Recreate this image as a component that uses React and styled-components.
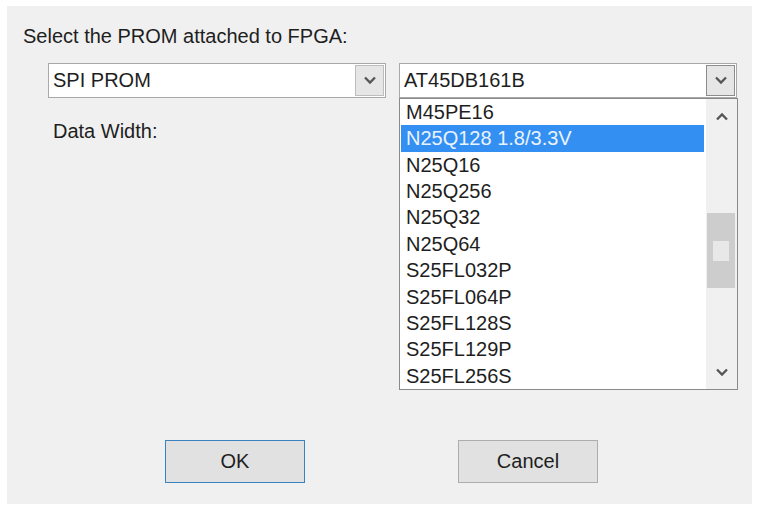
import React from "react";
import styled, { createGlobalStyle } from "styled-components";

const GlobalStyle = createGlobalStyle`
  html, body {
    margin: 0;
    padding: 0;
    background: #ffffff;
  }
  body {
    font-family: "Liberation Sans", Arial, sans-serif;
    color: #1e1e1e;
  }
`;

const Page = styled.div`
  width: 764px;
  height: 515px;
  padding: 6px 0 0 7px;
  box-sizing: border-box;
`;

const Dialog = styled.div`
  width: 745px;
  height: 498px;
  background: #f0f0f0;
  box-sizing: border-box;
  padding: 18px 0 21px 16px;
  display: flex;
  flex-direction: column;
  font-size: 20px;
`;

const Title = styled.div`
  line-height: 24px;
`;

const ComboRow = styled.div`
  display: flex;
  gap: 13px;
  margin: 15px 0 0 25px;
`;

const Column = styled.div`
  position: relative;
  display: flex;
  flex-direction: column;
  width: 338px;
`;

const Combo = styled.div`
  height: 35px;
  box-sizing: border-box;
  border: 1px solid #a9a9a9;
  background: #ffffff;
  display: flex;
  align-items: stretch;
`;

const ComboText = styled.div`
  flex: 1;
  padding-left: 4px;
  line-height: 33px;
  white-space: nowrap;
`;

const ComboButton = styled.div`
  width: 29px;
  margin: 1px;
  box-sizing: border-box;
  border: 1px solid ${(p) => (p.$dark ? "#8c8c8c" : "#bdbdbd")};
  background: #e6e6e6;
  display: flex;
  align-items: center;
  justify-content: center;
`;

const FieldLabel = styled.div`
  margin: 21px 0 0 5px;
  line-height: 24px;
`;

const DropList = styled.div`
  position: absolute;
  top: 35px;
  left: 0;
  width: 339px;
  height: 292px;
  box-sizing: border-box;
  border: 1px solid #8a8a8a;
  background: #ffffff;
  display: flex;
`;

const Items = styled.div`
  flex: 1;
  padding: 0 2px 0 1px;
`;

const Item = styled.div`
  height: 26.36px;
  line-height: 26px;
  padding-left: 5px;
  white-space: nowrap;
  background: ${(p) => (p.$selected ? "#3390f2" : "transparent")};
  color: ${(p) => (p.$selected ? "#eaf3ff" : "#1e1e1e")};
`;

const ScrollBar = styled.div`
  width: 31px;
  background: #f0f0f0;
  display: flex;
  flex-direction: column;
`;

const ScrollArrow = styled.div`
  height: 34px;
  display: flex;
  align-items: center;
  justify-content: center;
`;

const Track = styled.div`
  flex: 1;
`;

const Thumb = styled.div`
  margin: 80px 2px 0 1px;
  height: 75px;
  background: #cdcdcd;
  display: flex;
  align-items: center;
  justify-content: center;
`;

const Grip = styled.div`
  width: 16px;
  height: 20px;
  background: #e8e8e8;
`;

const ButtonRow = styled.div`
  margin-top: auto;
  display: flex;
  justify-content: center;
  gap: 153px;
  padding-right: 12px;
`;

const Button = styled.button`
  width: 140px;
  height: 43px;
  box-sizing: border-box;
  font-family: "Liberation Sans", Arial, sans-serif;
  font-size: 20px;
  color: #1e1e1e;
  background: #e1e1e1;
  border: 1px solid ${(p) => (p.$default ? "#3b83c0" : "#adadad")};
  padding: 0;
`;

const Chevron = ({ up }) => (
  <svg width="14" height="9" viewBox="0 0 14 9">
    <path
      d={up ? "M2 7.5 L7 2.5 L12 7.5" : "M2 1.5 L7 6.5 L12 1.5"}
      fill="none"
      stroke="#555555"
      strokeWidth="2.3"
    />
  </svg>
);

const proms = [
  "M45PE16",
  "N25Q128 1.8/3.3V",
  "N25Q16",
  "N25Q256",
  "N25Q32",
  "N25Q64",
  "S25FL032P",
  "S25FL064P",
  "S25FL128S",
  "S25FL129P",
  "S25FL256S",
];

export default function App() {
  return (
    <Page>
      <GlobalStyle />
      <Dialog>
        <Title>Select the PROM attached to FPGA:</Title>
        <ComboRow>
          <Column>
            <Combo>
              <ComboText>SPI PROM</ComboText>
              <ComboButton>
                <Chevron />
              </ComboButton>
            </Combo>
            <FieldLabel>Data Width:</FieldLabel>
          </Column>
          <Column>
            <Combo>
              <ComboText>AT45DB161B</ComboText>
              <ComboButton $dark>
                <Chevron />
              </ComboButton>
            </Combo>
            <DropList>
              <Items>
                {proms.map((p) => (
                  <Item key={p} $selected={p === "N25Q128 1.8/3.3V"}>
                    {p}
                  </Item>
                ))}
              </Items>
              <ScrollBar>
                <ScrollArrow>
                  <Chevron up />
                </ScrollArrow>
                <Track>
                  <Thumb>
                    <Grip />
                  </Thumb>
                </Track>
                <ScrollArrow>
                  <Chevron />
                </ScrollArrow>
              </ScrollBar>
            </DropList>
          </Column>
        </ComboRow>
        <ButtonRow>
          <Button $default>OK</Button>
          <Button>Cancel</Button>
        </ButtonRow>
      </Dialog>
    </Page>
  );
}
